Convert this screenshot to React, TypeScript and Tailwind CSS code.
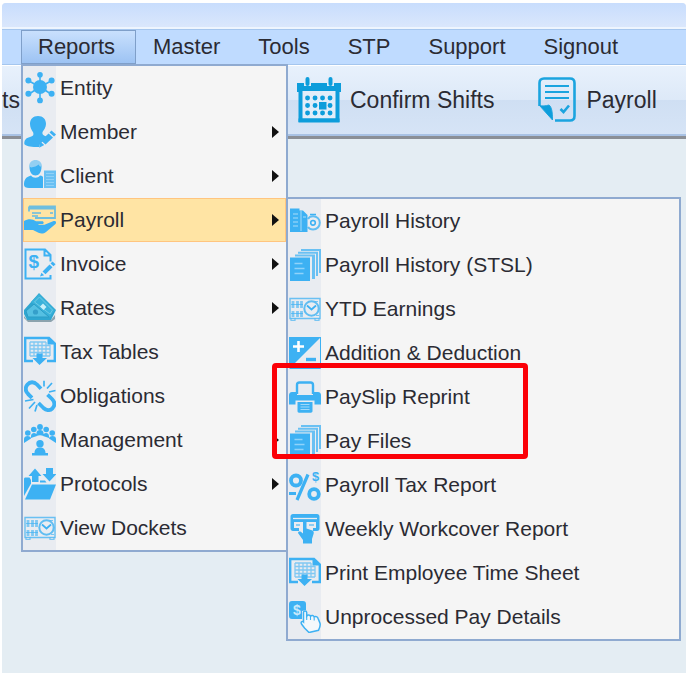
import React from 'react'

type IconProps = { children: React.ReactNode }

function Icon({ children }: IconProps) {
  return (
    <svg className="h-8 w-8 shrink-0 text-[#3db1f3]" viewBox="0 0 32 32" fill="currentColor" aria-hidden="true">
      {children}
    </svg>
  )
}

const EntityIcon = () => (
  <Icon>
    <path d="M16 15V3M16 15v13M16 15L5 9M16 15l11-6M16 15L5 22M16 15l11 7" stroke="currentColor" strokeWidth="1.6" />
    <circle cx="16" cy="15" r="7" />
    <circle cx="16" cy="2.8" r="2.8" />
    <circle cx="16" cy="28.4" r="2.9" />
    <circle cx="4.4" cy="8.6" r="3" />
    <circle cx="27.6" cy="8.6" r="3" />
    <circle cx="4.4" cy="21.8" r="3" />
    <circle cx="27.6" cy="21.8" r="3" />
  </Icon>
)

const MemberIcon = () => (
  <Icon>
    <path d="M14 0c5 0 8 3 8 8 0 3-2 6-3.500 8-.5 2 .5 3 2.500 4l2.500 1-7.500 7-.8 3C7 31.500 2 30 .3 28c0-4 1.500-6 5.700-7 3-.8 4-2 3.200-4.500C7.500 14 6 11 6 8c0-5 3-8 8-8z" />
    <path d="M27.500 14.500l4.500 4-2 2-4.500-4zM24.600 17.500l4.400 4-7.500 7-4.400-4zM16.200 25.500l4 3.600-5 2.600z" />
  </Icon>
)

const ClientIcon = () => (
  <Icon>
    <path d="M5 7C5 2.500 8 0 11.500 0S18 2.500 18 7z" opacity=".5" />
    <path d="M5.500 7c3 .5 7.500-.5 9-2.500C15.500 6 16 6.500 17.500 7c0 5-2.500 8.500-6 8.500S5.500 12 5.500 7z" />
    <path d="M0 25c0-5 1.500-8 7-9.500 2 3 7 3 9 0 2 .3 2.500.8 3 1.600V28H5C2 28 0 27 0 25z" />
    <path d="M20 10.500h12V28H20z" opacity=".75" />
    <path d="M22 13.500h8M22 16.500h8M22 19.500h8M22 22.500h8M22 25.500h8" stroke="#8fd1f7" strokeWidth="1" />
  </Icon>
)

const PayrollIcon = () => (
  <Icon>
    <path d="M5 2.500h26V14H11M5 2.500v5M5 4.500h26" fill="none" stroke="currentColor" strokeWidth="1.800" opacity=".75" />
    <path d="M8 9h9M8 12h6M26 9h3" stroke="currentColor" strokeWidth="1.800" opacity=".6" />
    <path d="M0 17c4-2.500 8.500-2.500 12 .3h6c2.200 0 2.200 2.700 0 2.700h-4l1 .8h5.500l8.500-3.600c2.500-.8 4 .8 2.500 2.800L22 28c-2.500 2-5 2-7.500.8L9 26H0z" />
  </Icon>
)

const InvoiceIcon = () => (
  <Icon>
    <path d="M26.500 13.500V7l-5.500-5.500H1.500v29H26.500V27M20.500 1.500v6h6" fill="none" stroke="currentColor" strokeWidth="2" />
    <text x="4.500" y="20" fontSize="19" fontWeight="bold" fontFamily="Liberation Sans, sans-serif">$</text>
    <path d="M28.500 13.500l3 2.800-2 2-3-2.800zM25.500 16.500l3 2.800-7 7-3-2.800zM17.500 24.800l2.600 2.500-4.100 1.200z" />
  </Icon>
)

const RatesIcon = () => (
  <Icon>
    <path d="M0 24L3 28h24l4-5v4l-4 3H4l-4-4z" fill="#8ca3ae" />
    <path d="M0 18L15 1l17 17-5 10H3l-3-6z" fill="#2fa6d0" />
    <path d="M7 10l8-8 16 16-5 7z" fill="#3ab2da" />
    <path d="M10.500 10l5-5 13 13-2.500 4z" fill="none" stroke="#6fcbe6" />
    <path d="M2 19l8-7 15 13H4z" fill="#55c0e2" stroke="#2c9dc6" />
    <path d="M16 14.500l3-3 3.500 3.500-3 3z" fill="#c8f0fa" />
    <circle cx="11.500" cy="20" r="2.600" fill="#359fca" />
  </Icon>
)

const TableDownIcon = () => (
  <Icon>
    <path d="M9 25H1.200V2H25l5.800 5.500V25H23" fill="none" stroke="currentColor" strokeWidth="2.400" />
    <path d="M23.500 1v7.500H32z" />
    <path d="M6 6h16M6 9.500h20M6 13h20M6 16.500h20M6 20h20M6 6v14M10 6v14M14 6v14M18 6v14M22 6v14M26 9v11" stroke="currentColor" strokeWidth="1.300" opacity=".6" />
    <path d="M12.500 17.500h6V22H23l-7.500 7L8.500 22h4z" />
  </Icon>
)

const ObligationsIcon = () => (
  <Icon>
    <path d="M4.500 14.500C1 11 1 7.500 3.500 4.500s6.500-3 9.500 0l4 4.200" fill="none" stroke="currentColor" strokeWidth="3.800" />
    <path d="M4 14l4 3.800M14.500 23l5 5c3 2.800 6.500 2.800 9 .3 2.700-3 2.500-6.300-.5-9.300l-4.500-4.300" fill="none" stroke="currentColor" strokeWidth="3.800" />
    <path d="M20 6.500V.8M23 8.500l5-5.500M25 12l6.500-1.500M9.500 19.500L1 21M11 22l-6 6.500M13 25l-2 6.500" stroke="currentColor" strokeWidth="1.700" />
  </Icon>
)

const ManagementIcon = () => (
  <Icon>
    <circle cx="3.800" cy="9" r="2.800" />
    <circle cx="9.800" cy="5.500" r="2.800" />
    <circle cx="16" cy="3" r="2.900" />
    <circle cx="22.200" cy="5.500" r="2.800" />
    <circle cx="28.200" cy="9" r="2.800" />
    <path d="M0 19v-4c0-2 1.500-3 3.500-3S7 13 7 14.500zM7 14V12c0-2 1.500-3 3-3s3 1 3 2v1zM12.500 12V9c0-2 1.500-3 3.500-3s3.500 1 3.500 3v3c-2-1-5-1-7 0zM19 12v-1c0-1 1.500-2 3-2s3 1 3 3v2zM25 14.500c0-1.500 1.500-2.500 3.500-2.500s3.500 1 3.500 3v4z" />
    <circle cx="16" cy="19.800" r="3.700" />
    <path d="M10.500 29c0-3.500 2-5.500 5.500-5.500s5.500 2 5.500 5.500h2.500v2.500H8V29z" />
  </Icon>
)

const ProtocolsIcon = () => (
  <Icon>
    <path d="M0 28V11c0-1 .5-1.500 1.500-1.500H5.500l1.500 2.500v3.500z" />
    <path d="M8 16.500H32L26 31.500H1z" />
    <path d="M8 14V8H4.500L11 .5 17.500 8h-3v6zM22 0h7v6h3.500L25.500 13.500 18.500 6H22z" />
    <path d="M16 12.500h5l1.500 2H16z" />
  </Icon>
)

const DocketIcon = () => (
  <Icon>
    <path d="M1 5.500h30v20H1z" fill="none" stroke="currentColor" strokeWidth="1.400" opacity=".75" />
    <path d="M4 8v7M4 18v6M8.500 8v7M8.500 18v6M12.500 8v7M12.500 18v6" stroke="currentColor" strokeWidth="2.800" opacity=".6" />
    <path d="M2 11.500h12M2 20.500h12M2 25.500v2h4v-2M26 25.500v2h4v-2M26 8.500h3M27 22.500h3" stroke="currentColor" strokeWidth="1.200" opacity=".65" fill="none" />
    <circle cx="22.500" cy="15.500" r="7.200" fill="none" stroke="currentColor" strokeWidth="2" opacity=".8" />
    <path d="M18 12.500l4.500 4 4.500-4" fill="none" stroke="currentColor" strokeWidth="1.700" />
  </Icon>
)

const HistoryIcon = () => (
  <Icon>
    <path d="M1 3.500h9.500v2H14l4.500 4.500v17H10V27H1z" />
    <path d="M4 9h5M4 13h5M4 17h5M4 21h5M12 6v20M14 12h3" stroke="#a9dcf9" strokeWidth="1" />
    <path d="M19 14c1-2 3-2.800 5-2.800 4 0 6.800 3 6.800 6.600S28 24.500 24 24.500c-2 0-4-.9-5-2.500" fill="none" stroke="currentColor" strokeWidth="2" opacity=".8" />
    <path d="M21 9.500h6" stroke="currentColor" strokeWidth="1.600" />
    <circle cx="24" cy="17.800" r="2.300" fill="none" stroke="currentColor" strokeWidth="1.600" />
  </Icon>
)

const StackIcon = () => (
  <Icon>
    <path d="M12 0h20v24h-2V2H12zM9 2.800h20V27h-2V4.800H9zM6 5.500h20V30h-3V7.500H6z" opacity=".75" />
    <path d="M1 8.500h20V32H1z" />
    <path d="M5.500 14.500h8M5.500 19.500h10M5.500 24.500h9" stroke="#8fd3fa" strokeWidth="1.600" />
  </Icon>
)

const PlusMinusIcon = () => (
  <Icon>
    <path d="M0 0h32L0 32z" />
    <path d="M4 9.500h11M9.500 4v11" stroke="#fff" strokeWidth="2.600" />
    <path d="M31.500 0v31.500H1" fill="none" stroke="currentColor" strokeWidth="1" />
    <path d="M17 22.500h10" stroke="currentColor" strokeWidth="3.400" />
  </Icon>
)

const PrinterIcon = () => (
  <Icon>
    <path d="M8 13V4c0-1.500 1-2.500 2.500-2.500h11c1.500 0 2.500 1 2.500 2.500v9" fill="none" stroke="currentColor" strokeWidth="2.400" />
    <path d="M3 11h5v3h16v-3h5c2 0 3 1.500 3 3v9.500h-6.500v-4h-19v4H0V14c0-1.500 1-3 3-3z" />
    <path d="M8.500 21h15v9c0 1-.7 1.700-1.700 1.700H10c-1 0-1.500-.7-1.500-1.700z" />
    <path d="M11.500 23.500h9M11.500 26h9M11.500 28.500h9" stroke="#9fd9fa" strokeWidth="1.200" />
  </Icon>
)

const TaxIcon = () => (
  <Icon>
    <circle cx="7" cy="11.500" r="5" fill="none" stroke="currentColor" strokeWidth="3.800" />
    <circle cx="25" cy="25" r="4.800" fill="none" stroke="currentColor" strokeWidth="3.800" />
    <path d="M19 5.500L8 31M0 24.500h7" stroke="currentColor" strokeWidth="3.200" />
    <text x="23" y="12" fontSize="13" fontWeight="bold" fontFamily="Liberation Sans, sans-serif">$</text>
  </Icon>
)

const WorkcoverIcon = () => (
  <Icon>
    <path d="M4 1h24c1.500 0 2.500 1 2.500 2.500v12c0 1.500-.8 2.500-2.500 2.500h-4v-3h3V9H5v6h5v3H4c-1.500 0-2.500-1-2.500-2.500v-12C1.500 2 2.500 1 4 1z" />
    <path d="M4 5.500h24" stroke="#e9ecf1" strokeWidth="1.300" />
    <path d="M14 8.500c0-2 3.500-2 3.500 0v7l6 2c1 .5 1.500 1.500 1.200 3L23 26v4.500h-9V27l-5-7c0-2 2.500-2.500 5 .5z" />
    <path d="M7 12h4M20 12h5" stroke="currentColor" strokeWidth="1.500" opacity=".7" />
  </Icon>
)

const UnprocessedIcon = () => (
  <Icon>
    <path d="M3 0h11c2 0 3 1 3 3v6l-4 1v8H3c-2 0-3-1-3-3V3c0-2 1-3 3-3z" />
    <text x="4" y="14" fontSize="14" fontWeight="bold" fill="#c9e9fb" fontFamily="Liberation Sans, sans-serif">$</text>
    <path d="M14.500 21V11.500c0-2 3.200-2 3.200 0v3.500c1-1.500 3.300-1.500 3.800.3 1.200-1.300 3.200-.8 3.700.7 1.300-1 3.200-.5 3.800 1.300l2 5c.7 2.500-.5 5-1.500 7L20 31.500l-4.500-4.500-3-4c-1-1.800.5-3.300 2-2z" fill="#f4f8fb" stroke="currentColor" strokeWidth="1.500" />
    <path d="M17.700 15v4M21.500 15.500v3.500M25.200 16.500v3" stroke="currentColor" strokeWidth="1.100" />
  </Icon>
)

const menuBar = ['Reports', 'Master', 'Tools', 'STP', 'Support', 'Signout']

const reportItems = [
  { label: 'Entity', icon: <EntityIcon /> },
  { label: 'Member', icon: <MemberIcon />, arrow: true },
  { label: 'Client', icon: <ClientIcon />, arrow: true },
  { label: 'Payroll', icon: <PayrollIcon />, arrow: true, open: true },
  { label: 'Invoice', icon: <InvoiceIcon />, arrow: true },
  { label: 'Rates', icon: <RatesIcon />, arrow: true },
  { label: 'Tax Tables', icon: <TableDownIcon /> },
  { label: 'Obligations', icon: <ObligationsIcon /> },
  { label: 'Management', icon: <ManagementIcon />, arrow: true },
  { label: 'Protocols', icon: <ProtocolsIcon />, arrow: true },
  { label: 'View Dockets', icon: <DocketIcon /> },
]

const payrollItems = [
  { label: 'Payroll History', icon: <HistoryIcon /> },
  { label: 'Payroll History (STSL)', icon: <StackIcon /> },
  { label: 'YTD Earnings', icon: <DocketIcon /> },
  { label: 'Addition & Deduction', icon: <PlusMinusIcon /> },
  { label: 'PaySlip Reprint', icon: <PrinterIcon /> },
  { label: 'Pay Files', icon: <StackIcon /> },
  { label: 'Payroll Tax Report', icon: <TaxIcon /> },
  { label: 'Weekly Workcover Report', icon: <WorkcoverIcon /> },
  { label: 'Print Employee Time Sheet', icon: <TableDownIcon /> },
  { label: 'Unprocessed Pay Details', icon: <UnprocessedIcon /> },
]

type MenuItemProps = {
  label: string
  icon: React.ReactNode
  arrow?: boolean
  open?: boolean
}

function MenuItem({ label, icon, arrow, open }: MenuItemProps) {
  return (
    <button
      className={`flex h-11 w-full items-center gap-1 border pr-1.5 text-left text-[21px] leading-6 whitespace-nowrap ${
        open ? 'border-[#ffc57f] bg-[#ffe4a4]' : 'border-transparent'
      }`}
    >
      {icon}
      <span>{label}</span>
      {arrow && (
        <svg className="ml-auto h-3 w-[7px]" viewBox="0 0 7 12" aria-hidden="true">
          <path d="M0 0l7 6-7 6z" fill="#111" />
        </svg>
      )}
    </button>
  )
}

function PayrollMenu() {
  return (
    <ul className="absolute -top-px left-full z-10 w-[395px] border-2 border-[#8faad0] bg-[linear-gradient(90deg,#e9ecf1_33px,#f5f5f5_33px)]">
      {payrollItems.map((item) => (
        <li key={item.label}>
          <MenuItem {...item} />
        </li>
      ))}
      {/* Marks the two entries to pick */}
      <li className="pointer-events-none absolute top-[164px] -left-4 h-24 w-64 rounded-sm border-[5px] border-[#fb0007]" aria-hidden="true" />
    </ul>
  )
}

function ReportsMenu() {
  return (
    <ul className="absolute top-full left-0 z-10 w-[267px] border-2 border-[#8faad0] bg-[linear-gradient(90deg,#e9ecf1_33px,#f5f5f5_33px)]">
      {reportItems.map((item) => (
        <li key={item.label} className={item.open ? 'relative' : undefined}>
          <MenuItem {...item} />
          {item.open && <PayrollMenu />}
        </li>
      ))}
    </ul>
  )
}

function CalendarIcon() {
  return (
    <svg className="h-[46px] w-[46px]" viewBox="0 0 46 46" aria-hidden="true">
      <path d="M1 6h44v9H1z" fill="#0d9ddb" />
      <path d="M4.500 14v29.500h37V14" fill="#e2edf9" stroke="#0d9ddb" strokeWidth="4" />
      <path d="M2.500 41.500h41v3.500h-41z" fill="#0d9ddb" />
      <path d="M8 0h7v9H8zM31 0h7v9h-7z" fill="#e2edf9" />
      <path d="M11.500 2v5M34.500 2v5" stroke="#0d9ddb" strokeWidth="4" strokeLinecap="round" />
      <path
        d="M11.500 21h.1M19 21h.1M26.500 21h.1M34 21h.1M11.500 28.500h.1M19 28.500h.1M34 28.500h.1M11.500 36h.1M19 36h.1M26.500 36h.1M34 36h.1"
        stroke="#0d9ddb"
        strokeWidth="4.800"
        strokeLinecap="round"
      />
      <path d="M23 25h7.500v7.500H23z" fill="#0d9ddb" />
    </svg>
  )
}

function PayrollDocIcon() {
  return (
    <svg className="h-[46px] w-[38px]" viewBox="0 0 38 46" fill="none" stroke="#1ba4df" aria-hidden="true">
      <path d="M1.500 29V6c0-3 1.500-4.500 4.500-4.500h26c3 0 4.500 1.500 4.500 4.500v33c0 3-1.500 4.500-4.500 4.500H17" strokeWidth="2.600" />
      <path d="M1.500 28.500c3 .8 6 .5 9.500-.5 2.500 2 3.500 6 3.500 15z" fill="#0d9ddb" strokeWidth="1" />
      <path d="M7 9h24M7 15h24M7 21h24" strokeWidth="2.200" />
      <path d="M22.500 32l3 3 5.500-6.500" strokeWidth="2.600" />
    </svg>
  )
}

export default function App() {
  return (
    <div className="flex min-h-screen flex-col bg-white px-0.5 pt-[3px] pb-0.5 font-['Liberation_Sans',Arial,sans-serif] text-[#2b2b33]">
      <div className="flex flex-1 flex-col overflow-hidden rounded-t bg-[#e4edf3]">
        {/* Title bar */}
        <header className="h-[26px] border-b-2 border-[#eef5fe] bg-linear-to-b from-[#c8ddfd] to-[#dae7fc]" />

        {/* Menu bar */}
        <nav className="flex h-9 border-y border-[#a5c6ee] bg-[#bfdbff] pl-[19px]">
          {menuBar.map((name) => (
            <div key={name} className="relative">
              <button
                className={`h-full border pr-5 pl-4 text-[22px] leading-6 ${
                  name === 'Reports'
                    ? 'border-[#7f9fc9] bg-linear-to-b from-[#c9e0fd] to-[#9dc3f3]'
                    : 'border-transparent'
                }`}
              >
                {name}
              </button>
              {name === 'Reports' && <ReportsMenu />}
            </div>
          ))}
        </nav>

        {/* Toolbar */}
        <div className="border-b-[3px] border-[#8b8f96]">
          <div className="flex h-[71px] border-t border-b-2 border-t-white border-b-[#a9c2e4] bg-[linear-gradient(#e8f1fc,#dde9f8_50%,#cfdff3_50%,#d6e4f6)] text-[23px] leading-7 whitespace-nowrap">
            <button className="w-[294px] text-left">ts</button>
            <button className="mr-11 flex items-center gap-2">
              <CalendarIcon />
              Confirm Shifts
            </button>
            <button className="flex items-center gap-2.5">
              <PayrollDocIcon />
              Payroll
            </button>
          </div>
        </div>
      </div>
    </div>
  )
}
